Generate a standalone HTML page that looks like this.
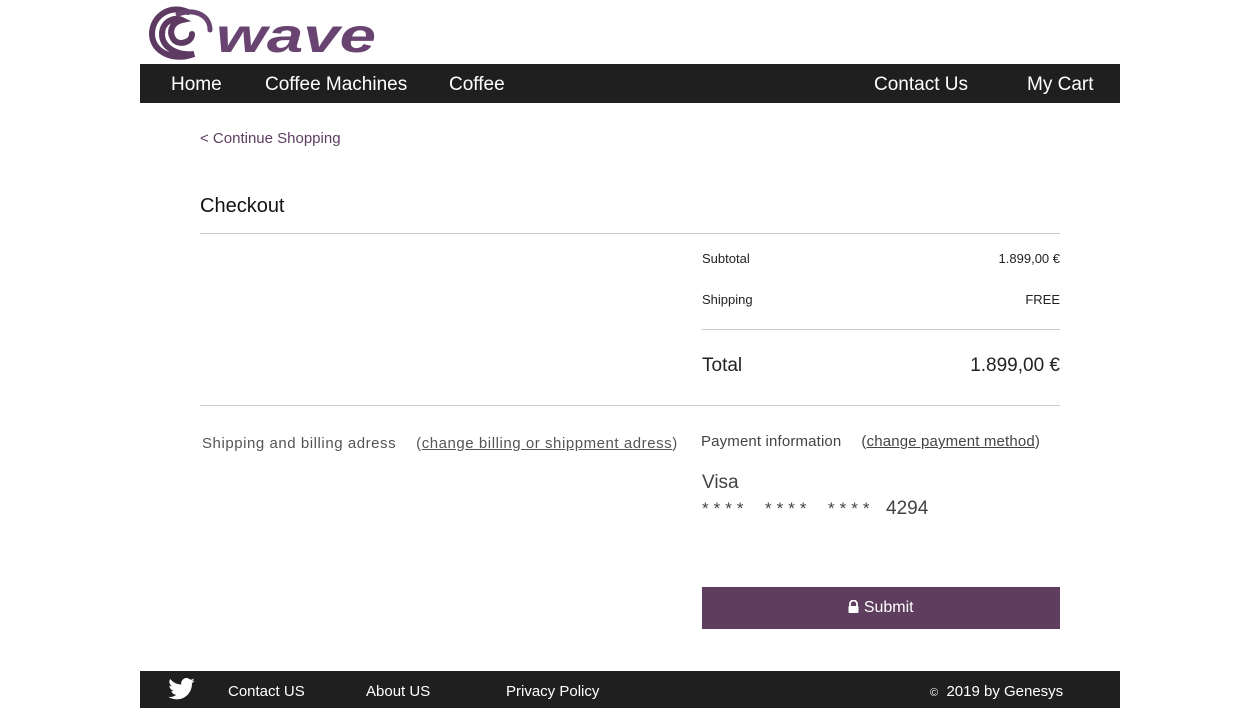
<!DOCTYPE html>
<html><head><meta charset="utf-8"><style>
*{margin:0;padding:0;box-sizing:border-box}
body{width:1260px;height:708px;background:#fff;font-family:"Liberation Sans",sans-serif;position:relative;overflow:hidden;color:#222}
.a{position:absolute;white-space:nowrap}
.nav{left:140px;top:64px;width:980px;height:39px;background:#1f1f1f}
.nav span{position:absolute;top:10px;color:#fff;font-size:19px}
.hr{position:absolute;height:1px;background:#ccc}
.foot{left:140px;top:671px;width:980px;height:37px;background:#1f1f1f}
.foot span{position:absolute;top:12px;color:#fff;font-size:15px}
u{text-decoration:underline}
.st{display:inline-block;width:63px;letter-spacing:5px;font-size:17px}
</style></head><body>
<svg class="a" style="left:148px;top:4px" width="232" height="56" viewBox="0 0 232 56">
<path d="M40 8C22 0 4 12 4 30C4 48 26 58 46 50C30 52 14 44 14 30C14 18 26 12 34 16C24 18 20 28 26 36C32 42 44 38 44 30" fill="none" stroke="#5e3a63" stroke-width="6" stroke-linecap="round"/>
<path d="M30 10C48 4 62 12 62 26" fill="none" stroke="#6a4470" stroke-width="5" stroke-linecap="round"/>
<text x="68" y="48" font-family="Liberation Sans" font-style="italic" font-weight="bold" font-size="48" fill="#6a4470" textLength="160" lengthAdjust="spacingAndGlyphs">wave</text>
</svg>
<div class="a nav"><span style="left:31px">Home</span><span style="left:125px">Coffee Machines</span><span style="left:309px">Coffee</span><span style="left:734px">Contact Us</span><span style="left:887px">My Cart</span></div>
<div class="a" style="left:200px;top:130px;font-size:15px;color:#5e3d62">&lt; Continue Shopping</div>
<div class="a" style="left:200px;top:195px;font-size:20px;color:#111">Checkout</div>
<div class="hr" style="left:200px;top:233px;width:860px"></div>
<div class="a" style="left:702px;top:251px;font-size:13px">Subtotal</div>
<div class="a" style="right:200px;top:251px;font-size:13px">1.899,00 €</div>
<div class="a" style="left:702px;top:292px;font-size:13px">Shipping</div>
<div class="a" style="right:200px;top:292px;font-size:13px">FREE</div>
<div class="hr" style="left:702px;top:329px;width:358px"></div>
<div class="a" style="left:702px;top:355px;font-size:19px">Total</div>
<div class="a" style="right:200px;top:355px;font-size:19px">1.899,00 €</div>
<div class="hr" style="left:200px;top:405px;width:860px"></div>
<div class="a" style="left:202px;top:435px;font-size:15px;color:#555;letter-spacing:0.55px">Shipping and billing adress<span style="display:inline-block;width:20px"></span>(<u>change billing or shippment adress</u>)</div>
<div class="a" style="left:701px;top:433px;font-size:15px;color:#444;letter-spacing:0.15px">Payment information<span style="display:inline-block;width:20px"></span>(<u>change payment method</u>)</div>
<div class="a" style="left:702px;top:472px;font-size:19px;color:#444">Visa</div>
<div class="a" style="left:702px;top:498px;font-size:19px;color:#444"><span class="st">****</span><span class="st">****</span><span class="st" style="width:58px">****</span>4294</div>
<div class="a" style="left:702px;top:587px;width:358px;height:42px;background:#5e3d5e;color:#fff;font-size:16px;text-align:center;line-height:42px">
<svg width="11" height="13" viewBox="0 0 11 13" style="vertical-align:-1px"><path d="M2 6V4a3.5 3.5 0 0 1 7 0v2" fill="none" stroke="#fff" stroke-width="1.8"/><rect x="0.5" y="6" width="10" height="7" rx="1" fill="#fff"/></svg> Submit</div>
<div class="a foot">
<svg style="position:absolute;left:28px;top:7px" width="27" height="22" viewBox="0 0 24 20"><path fill="#fff" d="M24 2.4a9.8 9.8 0 0 1-2.8.8A4.9 4.9 0 0 0 23.3.4a9.9 9.9 0 0 1-3.1 1.2A4.9 4.9 0 0 0 11.8 6 14 14 0 0 1 1.7.9a4.9 4.9 0 0 0 1.5 6.6A4.9 4.9 0 0 1 1 6.9a4.9 4.9 0 0 0 3.9 4.8 4.9 4.9 0 0 1-2.2.1 4.9 4.9 0 0 0 4.6 3.4A9.9 9.9 0 0 1 0 17.2 14 14 0 0 0 7.5 19.4c9.1 0 14-7.5 14-14v-.6A10 10 0 0 0 24 2.4z"/></svg>
<span style="left:88px">Contact US</span><span style="left:226px">About US</span><span style="left:366px">Privacy Policy</span><span style="left:790px"><small style="font-size:11px">©</small>&nbsp; 2019 by Genesys</span></div>
</body></html>
